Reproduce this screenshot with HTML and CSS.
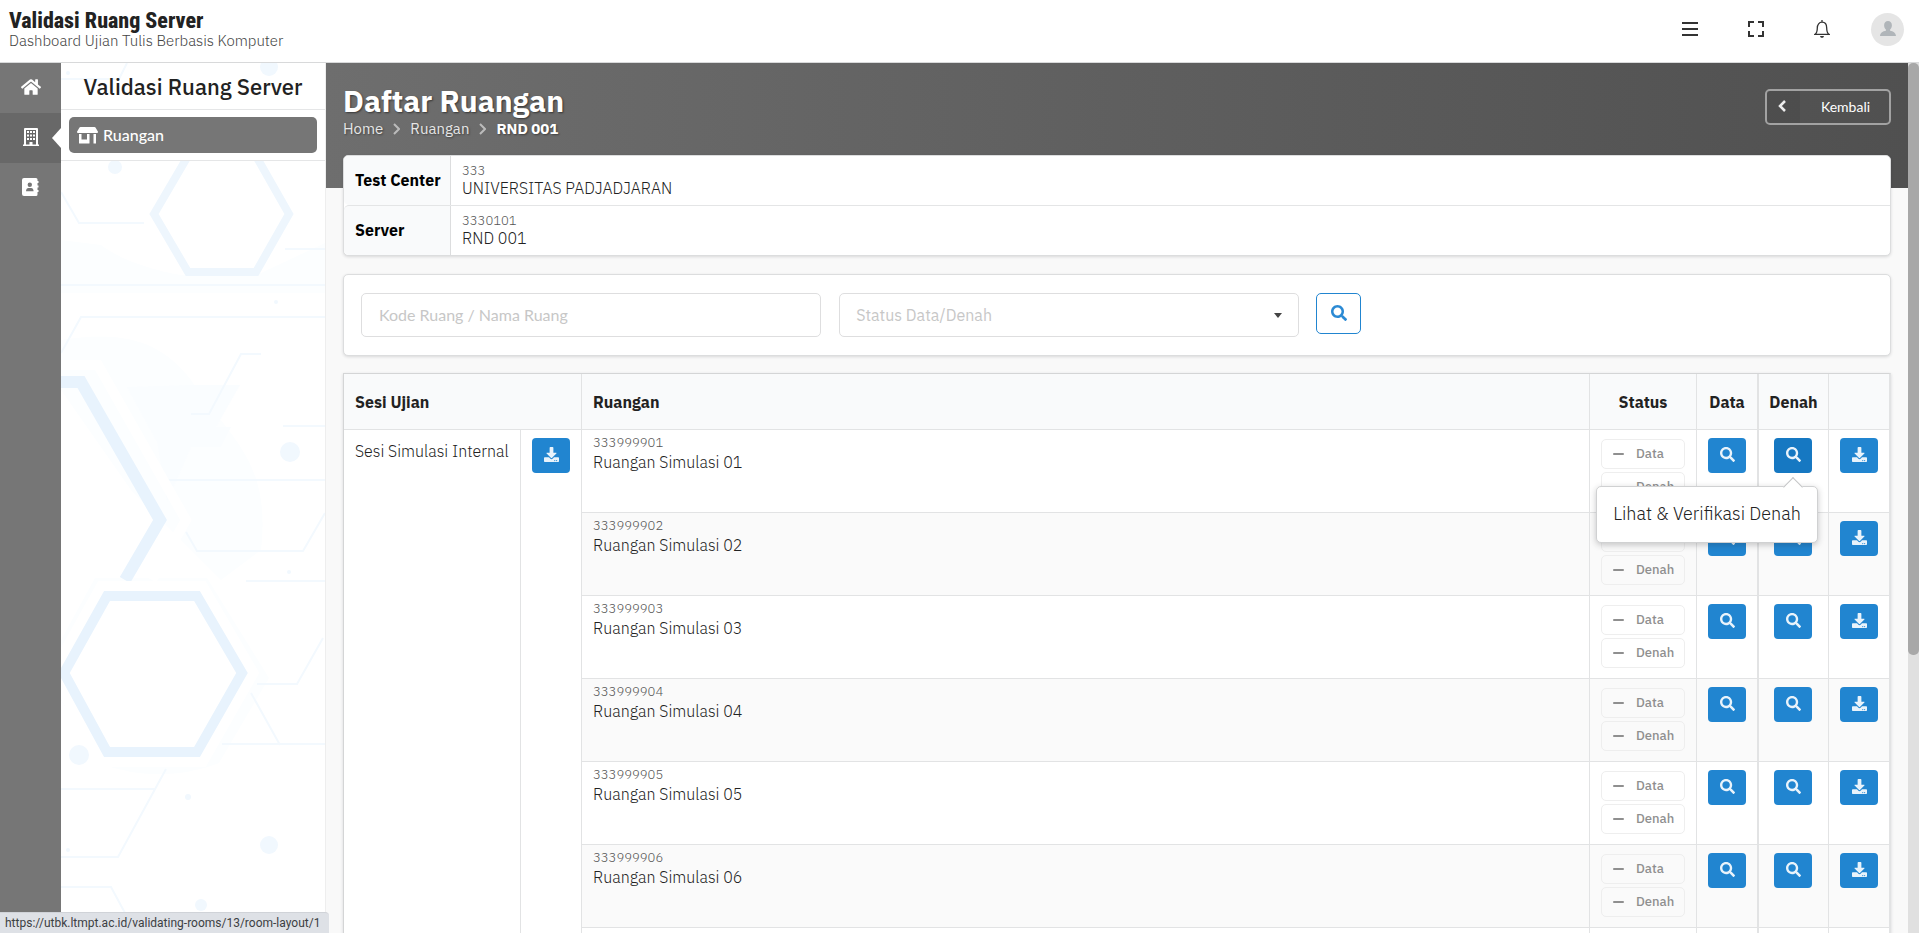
FILE: index.html
```
<!DOCTYPE html>
<html lang="id">
  <head>
    <meta charset="UTF-8" />
    <meta name="viewport" content="width=device-width, initial-scale=1.0" />
    <title>Validasi Ruang Server</title>
    <link rel="stylesheet" href="styles.css">
  </head>
  <body>
    <svg class="sprite" aria-hidden="true">
      <symbol id="i-search" viewBox="0 0 512 512">
        <path d="M505 442.7L405.3 343c-4.5-4.5-10.6-7-17-7H372c27.6-35.3 44-79.7 44-128C416 93.1 322.9 0 208 0S0 93.1 0 208s93.1 208 208 208c48.3 0 92.7-16.4 128-44v16.3c0 6.4 2.5 12.5 7 17l99.7 99.7c9.4 9.4 24.6 9.4 33.9 0l28.3-28.3c9.4-9.4 9.4-24.6.1-34zM208 336c-70.7 0-128-57.2-128-128 0-70.7 57.2-128 128-128 70.7 0 128 57.2 128 128 0 70.7-57.2 128-128 128z" />
      </symbol>
      <symbol id="i-download" viewBox="0 0 512 512">
        <path d="M216 0h80c13.3 0 24 10.7 24 24v168h87.7c17.8 0 26.7 21.5 14.1 34.1L269.7 378.3c-7.5 7.5-19.8 7.5-27.3 0L90.1 226.1c-12.6-12.6-3.7-34.1 14.1-34.1H192V24c0-13.3 10.7-24 24-24zm296 376v112c0 13.3-10.7 24-24 24H24c-13.3 0-24-10.7-24-24V376c0-13.3 10.7-24 24-24h146.7l49 49c20.1 20.1 52.5 20.1 72.6 0l49-49H488c13.3 0 24 10.7 24 24zm-124 88c0-11-9-20-20-20s-20 9-20 20 9 20 20 20 20-9 20-20zm64 0c0-11-9-20-20-20s-20 9-20 20 9 20 20 20 20-9 20-20z" />
      </symbol>
      <symbol id="i-minus" viewBox="0 0 12 12">
        <rect x="0" y="5" width="12" height="2" rx="1" />
      </symbol>
    </svg>

    <header class="topbar">
      <div class="brand">
        <strong>Validasi Ruang Server</strong>
        <span>Dashboard Ujian Tulis Berbasis Komputer</span>
      </div>
      <nav class="top-actions">
        <button aria-label="Menu">
          <svg width="16" height="16" viewBox="0 0 16 16"><path d="M0 2h16M0 8h16M0 14h16" fill="none" stroke="#333" stroke-width="2" /></svg>
        </button>
        <button aria-label="Layar penuh">
          <svg width="16" height="16" viewBox="0 0 16 16"><path d="M1 6V1h5M10 1h5v5M15 10v5h-5M6 15H1v-5" fill="none" stroke="#333" stroke-width="2" /></svg>
        </button>
        <button aria-label="Notifikasi">
          <svg width="16" height="18" viewBox="0 0 16 18"><path d="M8 0v2M1 14.300h14c-1.800-1.200-2.300-3-2.300-6.300C12.700 4.500 10.800 2.200 8 2.200S3.300 4.500 3.300 8c0 3.300-.5 5.100-2.300 6.300z" fill="none" stroke="#333" stroke-width="1.300" /><path d="M6 16h4c-.3 1.300-1 1.800-2 1.800S6.300 17.300 6 16z" fill="#333" /></svg>
        </button>
        <button class="avatar" aria-label="Profil">
          <svg width="16" height="16" viewBox="0 0 16 16" fill="#b0b5b9"><path d="M8 0c2.400 0 3.900 1.800 3.900 4.200 0 1.900-.7 3.500-1.800 4.400v1.200c3 .7 5.500 1.700 5.900 5.200H0c.4-3.500 2.900-4.500 5.900-5.200V8.600C4.800 7.700 4.100 6.100 4.100 4.200 4.100 1.800 5.600 0 8 0z" /></svg>
        </button>
      </nav>
    </header>

    <div class="shell">
      <nav class="rail">
        <a href="#" aria-label="Beranda">
          <svg width="20" height="18" viewBox="0 0 576 512"><path d="M280.370 148.260L96 300.110V464a16 16 0 0 0 16 16l112.060-.29a16 16 0 0 0 15.920-16V368a16 16 0 0 1 16-16h64a16 16 0 0 1 16 16v95.640a16 16 0 0 0 16 16.050L464 480a16 16 0 0 0 16-16V300L295.670 148.260a12.190 12.190 0 0 0-15.300 0zM571.600 251.470L488 182.560V44.050a12 12 0 0 0-12-12h-56a12 12 0 0 0-12 12v72.610L318.470 43a48 48 0 0 0-61 0L4.340 251.470a12 12 0 0 0-1.600 16.900l25.500 31A12 12 0 0 0 45.150 301l235.220-193.740a12.190 12.190 0 0 1 15.300 0L530.900 301a12 12 0 0 0 16.900-1.600l25.500-31a12 12 0 0 0-1.700-16.930z" /></svg>
        </a>
        <a href="#" class="active" aria-label="Ruangan">
          <svg width="16" height="18" viewBox="0 0 16 18"><path fill-rule="evenodd" d="M1 1q0-1 1-1h12q1 0 1 1v15.500h1V18H0v-1.500h1zM3 2v14.500h3.500V14h3v2.500H13V2zM4 3h2v2H4zM7 3h2v2H7zM10 3h2v2h-2zM4 6.500h2v2H4zM7 6.500h2v2H7zM10 6.500h2v2h-2zM4 10h2v2H4zM7 10h2v2H7zM10 10h2v2h-2z" /></svg>
        </a>
        <a href="#" aria-label="Kontak">
          <svg width="17" height="18" viewBox="0 0 17 18"><path fill-rule="evenodd" d="M2 0h12q1.500 0 1.500 1.500V3h1v2h-1v2.500h1v2h-1V12h1v2h-1v2.500Q15.500 18 14 18H2q-2 0-2-2V2q0-2 2-2zM7.800 4.500a2.200 2.200 0 1 0 0 4.400 2.200 2.200 0 0 0 0-4.400zM4 13.300h7.600c0-2.100-1.200-3.300-2.500-3.300H6.500C5.200 10 4 11.200 4 13.300z" /></svg>
        </a>
      </nav>

      <aside class="side">
        <!-- honeycomb backdrop -->
        <svg class="side-bg" viewBox="61 63 264 870" preserveAspectRatio="xMinYMin slice" fill="none" aria-hidden="true">
          <g fill="#fcfeff">
            <path d="M61 240l40 5c20 15 50 25 80 30l80-2 64-30v50H61z" />
            <path d="M61 340c60-10 100 0 130 40 40 60 80 80 70 170l-40 30-30-30-60-60-70-100z" />
            <path d="M95 578h112l62 100-50 85c-40 15-80 15-120 0L61 700v-60z" />
          </g>
          <path d="M190 385h50l-24 42 15 0-10 20h-30l-24 55-10-60-30-55z" fill="#fafdff" />
          <g stroke="#f3f9fe" stroke-width="2">
            <path d="M61 192l18 31h65M61 285h264M61 353l20-36h244M191 414h18l32-60h20M283 426h42M168 480h157M186 532l11 19h106l22-38M246 581h79M257 684h40l26-46M251 693l29 52M222 744h103M61 789h94M166 769l-48 88H61M61 887h50l14 26M285 249h40M61 79h58l8-16" />
          </g>
          <path d="M188 156h68l33 58-33 58h-68l-34-58z" fill="#fff" stroke="#eef6fd" stroke-width="8" />
          <path d="M50 365h48l88 155-34 60" stroke="#fff" stroke-width="10" />
          <path d="M50 382h31l79 138-35 60" stroke="#e8f3fd" stroke-width="12" />
          <path d="M107 596h90l45 77-45 79h-90l-43-79z" fill="#fff" stroke="#fff" stroke-width="30" />
          <path d="M107 596h90l45 77-45 79h-90l-43-79z" fill="#fff" stroke="#e8f3fd" stroke-width="10" />
          <g fill="#f1f8fe">
            <circle cx="79" cy="755" r="10" /><circle cx="269" cy="845" r="9" /><circle cx="290" cy="452" r="10" />
            <circle cx="201" cy="905" r="6" /><circle cx="188" cy="797" r="3" /><circle cx="115" cy="167" r="7" />
            <circle cx="269" cy="67" r="9" /><circle cx="68" cy="73" r="2" /><circle cx="276" cy="302" r="2" /><circle cx="289" cy="572" r="2" /><circle cx="68" cy="850" r="2" />
          </g>
        </svg>
        <h2>Validasi Ruang Server</h2>
        <div class="side-menu">
          <a href="#">
            <svg width="21" height="17" viewBox="0 0 21 17"><path fill-rule="evenodd" d="M3.500 0h14q.7 0 1 .5L21 4.700Q21.200 6 20 6H1Q-.2 6 0 4.700L2.500.5Q2.800 0 3.500 0zM2 7h2.500v5.500H10V7h2.500v9q0 .5-.5.500H2.500Q2 16.500 2 16zM16.500 7H19v9.500h-2.500z" /></svg>
            Ruangan
          </a>
        </div>
      </aside>

      <main class="content">
        <div class="banner">
          <div>
            <h1>Daftar Ruangan</h1>
            <nav class="crumbs">
              <a href="#">Home</a>
              <svg width="7" height="12" viewBox="0 0 7 12"><path d="M1 1l5 5-5 5" /></svg>
              <a href="#">Ruangan</a>
              <svg width="7" height="12" viewBox="0 0 7 12"><path d="M1 1l5 5-5 5" /></svg>
              <b>RND 001</b>
            </nav>
          </div>
          <button class="back">
            <span class="back-icon"><svg width="8" height="12" viewBox="0 0 8 12"><path d="M7 1L2 6l5 5" fill="none" stroke="#eee" stroke-width="2.500" /></svg></span>
            <span class="back-label">Kembali</span>
          </button>
        </div>

        <table class="card info">
          <tr>
            <th scope="row">Test Center</th>
            <td><small>333</small>UNIVERSITAS PADJADJARAN</td>
          </tr>
          <tr>
            <th scope="row">Server</th>
            <td><small>3330101</small>RND 001</td>
          </tr>
        </table>

        <form class="card filter">
          <div class="field">
            <input type="text" aria-label="Kode Ruang / Nama Ruang" placeholder="Kode Ruang / Nama Ruang" />
          </div>
          <div class="field select">
            <select aria-label="Status Data/Denah">
              <option>Status Data/Denah</option>
            </select>
          </div>
          <button type="button" class="search" aria-label="Cari"><svg width="16" height="16"><use href="#i-search" /></svg></button>
        </form>

        <table class="rooms">
          <colgroup>
            <col class="c-session" /><col class="c-file" /><col /><col class="c-status" /><col class="c-data" /><col class="c-layout" /><col class="c-last" />
          </colgroup>
          <thead>
            <tr>
              <th colspan="2">Sesi Ujian</th>
              <th>Ruangan</th>
              <th class="center">Status</th>
              <th class="center">Data</th>
              <th class="center">Denah</th>
              <th></th>
            </tr>
          </thead>
          <tbody id="room-list"></tbody>
        </table>
      </main>

      <div class="scrollbar"><div class="thumb"></div></div>
    </div>

    <div class="status-url">https://utbk.ltmpt.ac.id/validating-rooms/13/room-layout/1</div>

    <script>
      const total = 7;

      function iconButton(icon, label, extra) {
        return `<button class="btn ${extra || ""}" aria-label="${label}"><svg width="15" height="15"><use href="#${icon}" /></svg></button>`;
      }

      function statusLabel(text) {
        return `<span class="label"><svg width="11" height="12"><use href="#i-minus" /></svg>${text}</span>`;
      }

      function renderRooms() {
        let rows = "";
        for (let i = 1; i <= total; i++) {
          let session = i === 1
            ? `<td class="session" rowspan="${total}">Sesi Simulasi Internal</td>
               <td rowspan="${total}">${iconButton("i-download", "Unduh sesi")}</td>`
            : "";
          let layout = i === 1
            ? `<div class="tip-anchor">${iconButton("i-search", "Lihat denah", "hover")}<div class="tip" role="tooltip">Lihat &amp; Verifikasi Denah</div></div>`
            : iconButton("i-search", "Lihat denah");
          rows += `<tr class="${i % 2 ? "" : "even"}">${session}
            <td class="room"><small>33399990${i}</small>Ruangan Simulasi 0${i}</td>
            <td class="status">${statusLabel("Data")}${statusLabel("Denah")}</td>
            <td>${iconButton("i-search", "Lihat data")}</td>
            <td>${layout}</td>
            <td>${iconButton("i-download", "Unduh")}</td>
          </tr>`;
        }
        document.getElementById("room-list").innerHTML = rows;
      }

      renderRooms();
    </script>
  </body>
</html>
```
FILE: styles.css
```
* {
  box-sizing: border-box;
}
body {
  margin: 0;
  height: 100vh;
  display: flex;
  flex-direction: column;
  overflow: hidden;
  font-family: "IBM Plex Sans", Roboto, sans-serif;
  font-size: 16px;
  font-weight: 300;
  line-height: 20px;
  color: #222;
  background: #fff;
}
a {
  color: inherit;
  text-decoration: none;
}
button {
  font-family: inherit;
  cursor: pointer;
  padding: 0;
  border: none;
  background: none;
}
.sprite {
  position: absolute;
  width: 0;
  height: 0;
}

/* header */
.topbar {
  display: flex;
  justify-content: space-between;
  align-items: center;
  height: 63px;
  flex: none;
  padding: 0 15px 4px 9px;
  border-bottom: 1px solid #d8d9da;
}
.brand {
  padding-top: 2px;
}
.brand strong {
  display: block;
  font-family: "Liberation Sans Narrow", "Roboto Condensed", Roboto, sans-serif;
  font-size: 22px;
  font-weight: 800;
  line-height: 22px;
}
.brand span {
  display: block;
  font-size: 15px;
  line-height: 18px;
  color: #444;
}
.top-actions {
  display: flex;
  align-items: center;
  gap: 50px;
}
.top-actions button {
  display: flex;
  align-items: center;
  justify-content: center;
}
.top-actions .avatar {
  width: 33px;
  height: 33px;
  margin-left: -9px;
  border-radius: 50%;
  background: #e5e5e5;
}

/* side navigation */
.shell {
  display: flex;
  flex: 1;
  min-height: 0;
}
.rail {
  width: 61px;
  flex: none;
  background: #767676;
}
.rail a {
  position: relative;
  display: flex;
  align-items: center;
  justify-content: center;
  height: 50px;
  padding-bottom: 2px;
  fill: #fff;
}
.rail a.active {
  background: #686868;
}
.rail a.active::after {
  content: "";
  position: absolute;
  right: 0;
  top: 15px;
  border: 10px solid transparent;
  border-left: none;
  border-right: 9px solid #fff;
}
.side {
  position: relative;
  width: 264px;
  flex: none;
}
.side-bg {
  position: absolute;
  inset: 0;
  width: 100%;
  height: 100%;
  z-index: -1;
}
.side h2 {
  margin: 0;
  height: 47px;
  font-size: 22px;
  font-weight: 500;
  line-height: 47px;
  text-align: center;
  border-bottom: 1px solid #e5e6e7;
}
.side-menu {
  padding: 7px 8px;
  background: #fff;
  border-bottom: 1px solid #e5e6e7;
}
.side-menu a {
  display: flex;
  align-items: center;
  gap: 5px;
  height: 36px;
  padding-left: 8px;
  border-radius: 5px;
  background: #767676;
  color: #fff;
  fill: #fff;
  font-family: Lato, sans-serif;
  font-weight: 500;
}

/* page content */
.content {
  flex: 1;
  min-width: 0;
  padding: 0 17px;
  background: #f9f9f9;
  border-left: 1px solid #eee;
  overflow-y: auto;
  scrollbar-width: none;
}
.banner {
  display: flex;
  justify-content: space-between;
  align-items: flex-start;
  height: 125px;
  margin: 0 -17px -33px -18px;
  padding: 26px 17px 0 18px;
  background: linear-gradient(90deg, #6e6e6e, #505050);
  color: #fff;
}
.banner h1 {
  margin: 0 0 4px;
  font-size: 30px;
  font-weight: 700;
  line-height: 24px;
  text-shadow: 1px 1px 2px rgba(0, 0, 0, 0.5);
}
.crumbs {
  display: flex;
  align-items: center;
  gap: 10px;
  font-size: 15px;
  font-weight: 400;
  line-height: 24px;
  text-shadow: 1px 1px 2px rgba(0, 0, 0, 0.4);
}
.crumbs a {
  color: #e6e6e6;
}
.crumbs svg {
  fill: none;
  stroke: #bbb;
  stroke-width: 2px;
}
.back {
  display: flex;
  width: 126px;
  height: 36px;
  border: 2px solid #a2a2a2;
  border-radius: 5px;
  color: #fff;
  font-family: Lato, sans-serif;
  font-size: 14px;
}
.back-icon {
  display: flex;
  align-items: center;
  justify-content: center;
  width: 33px;
  height: 100%;
  padding: 0 3px 2px 0;
  background: rgba(0, 0, 0, 0.05);
}
.back-label {
  flex: 1;
  padding-left: 2px;
  line-height: 32px;
}
.card {
  width: 100%;
  margin-bottom: 17px;
  background: #fff;
  border: 1px solid #dcddde;
  border-radius: 5px;
  box-shadow: 0 1px 3px rgba(34, 36, 38, 0.15);
}
small {
  display: block;
  font-size: 13px;
  line-height: 16px;
  color: #555;
}
.info {
  position: relative;
  margin-bottom: 18px;
  border-collapse: separate;
  border-spacing: 0;
}
.info th,
.info td {
  height: 49px;
  padding: 4px 11px;
  line-height: 19px;
  text-align: left;
}
.info th {
  width: 107px;
  padding-right: 0;
  font-weight: 700;
  white-space: nowrap;
  color: #000;
  background: #f9fafb;
  border-right: 1px solid #dcddde;
  border-radius: 5px 0 0 5px;
}
.info tr + tr > * {
  height: 50px;
  border-top: 1px solid #e4e5e6;
}
.filter {
  display: flex;
  height: 82px;
  padding: 18px 8px;
}
.field {
  flex: 0 0 calc(100% * 5 / 16);
  padding: 0 9px;
}
.field input,
.field select {
  width: 100%;
  height: 44px;
  padding: 0 16px;
  border: 1px solid #dededf;
  border-radius: 5px;
  background: #fff;
  color: #c7c7c7;
  font: 400 16px Lato, sans-serif;
  appearance: none;
}
.field input {
  padding: 0 17px 2px;
}
.field input::placeholder {
  color: #c7c7c7;
}
.select {
  position: relative;
}
.field select {
  font-family: "IBM Plex Sans", Roboto, sans-serif;
}
.select::after {
  content: "";
  position: absolute;
  right: 26px;
  top: 20px;
  border: 4px solid transparent;
  border-top: 5px solid #444;
  border-bottom: none;
}
.search {
  display: flex;
  align-items: center;
  justify-content: center;
  width: 45px;
  height: 41px;
  margin-left: 8px;
  padding-bottom: 2px;
  border: 1px solid #2185d0;
  border-radius: 5px;
  fill: #2b8ad4;
}

/* room table */
.rooms {
  width: 100%;
  table-layout: fixed;
  border-collapse: separate;
  border-spacing: 0;
  border: 1px solid #d4d5d6;
  border-right: 2px solid #e2e3e4;
  background: #fff;
  box-shadow: 0 1px 3px rgba(34, 36, 38, 0.15);
}
.c-session {
  width: 176px;
}
.c-file {
  width: 61px;
}
.c-status {
  width: 107px;
}
.c-data {
  width: 61px;
}
.c-layout {
  width: 71px;
}
.c-last {
  width: 61px;
}
.rooms th {
  height: 55px;
  padding: 0 11px;
  font-weight: 700;
  text-align: left;
  background: #f9fafb;
}
.rooms th.center {
  padding: 0;
  text-align: center;
}
.rooms td {
  height: 83px;
  padding: 8px 11px 4px;
  vertical-align: top;
  border-top: 1px solid #e2e3e4;
}
.rooms tr > * + *,
.rooms .room {
  border-left: 1px solid #e2e3e4;
}
.rooms tr > :nth-last-child(2) {
  border-left-width: 2px;
}
.rooms td:nth-last-child(2) {
  padding-left: 10px;
}
.rooms .session {
  padding-top: 11px;
}
.rooms .room {
  padding-top: 5px;
  line-height: 22px;
}
.even {
  background: #fafafa;
}
.rooms .status {
  padding-top: 9px;
}
.label {
  display: flex;
  align-items: center;
  gap: 12px;
  height: 30px;
  margin-bottom: 3px;
  padding-left: 11px;
  border: 1px solid #eee;
  border-radius: 5px;
  font-size: 13px;
  font-weight: 500;
  color: #8f8f8f;
  fill: #8f8f8f;
}
.btn {
  display: flex;
  align-items: center;
  justify-content: center;
  width: 38px;
  height: 35px;
  padding-bottom: 2px;
  border-radius: 4px;
  background: #2185d0;
  fill: #e9f3fb;
}
.btn.hover {
  background: #1678c2;
}
.room ~ td .btn {
  margin: 0 auto;
}
.tip-anchor {
  position: relative;
}
.tip {
  position: absolute;
  right: -1px;
  top: 48px;
  z-index: 5;
  width: 222px;
  height: 57px;
  border: 1px solid #d0d1d2;
  border-radius: 5px;
  background: #fff;
  box-shadow: 0 2px 6px rgba(34, 36, 38, 0.25);
  font-size: 18px;
  line-height: 54px;
  text-align: center;
  white-space: nowrap;
}
.tip::before {
  content: "";
  position: absolute;
  right: 17px;
  top: -7px;
  width: 13px;
  height: 13px;
  background: #fff;
  border: 1px solid #c4c5c6;
  border-right: none;
  border-bottom: none;
  transform: rotate(45deg);
}

.scrollbar {
  width: 11px;
  flex: none;
  background: #e0e0e0;
}
.thumb {
  height: 68%;
  border-radius: 5px;
  background: #a8a8a8;
}
.status-url {
  position: fixed;
  left: 0;
  bottom: 0;
  height: 21px;
  padding: 0 9px 0 5px;
  border-top: 1px solid #d0d3d8;
  border-top-right-radius: 4px;
  background: #dee1e6;
  color: #3c4043;
  font: 400 12px/21px Roboto, sans-serif;
}
```
